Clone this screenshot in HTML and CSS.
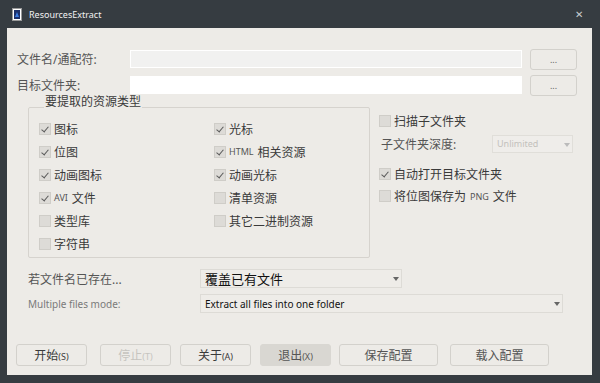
FILE: index.html
```html
<!DOCTYPE html>
<html lang="zh-CN">
<head>
    <meta charset="UTF-8">
    <title>ResourcesExtract</title>
    <link rel="stylesheet" href="styles.css">
</head>
<body>
    <div class="window">
        <!-- Title bar -->
        <div class="titlebar">
            <svg class="app-icon" width="10" height="13" viewBox="0 0 10 13">
                <rect x="0.5" y="0.5" width="9" height="12" fill="#fff" stroke="#999"/>
                <rect x="2" y="2" width="6" height="9" fill="#1b2f6b"/>
                <path d="M3 9 L5 4 L7 9 Z" fill="#3a7be0"/>
            </svg>
            <span class="title">ResourcesExtract</span>
            <span class="close">&#x2715;</span>
        </div>

        <div class="client">
            <!-- Paths -->
            <div class="path-row">
                <span class="label">文件名/通配符:</span>
                <div class="input input-dim"></div>
                <button class="btn btn-browse">...</button>
            </div>
            <div class="path-row">
                <span class="label">目标文件夹:</span>
                <div class="input"></div>
                <button class="btn btn-browse">...</button>
            </div>

            <div class="middle">
                <!-- Resource types -->
                <fieldset class="group">
                    <legend>要提取的资源类型</legend>
                    <div class="types">
                        <label class="check on"><span class="box"></span>图标</label>
                        <label class="check on"><span class="box"></span>光标</label>
                        <label class="check on"><span class="box"></span>位图</label>
                        <label class="check on"><span class="box"></span><small>HTML</small>相关资源</label>
                        <label class="check on"><span class="box"></span>动画图标</label>
                        <label class="check on"><span class="box"></span>动画光标</label>
                        <label class="check on"><span class="box"></span><small>AVI</small>文件</label>
                        <label class="check"><span class="box"></span>清单资源</label>
                        <label class="check"><span class="box"></span>类型库</label>
                        <label class="check"><span class="box"></span>其它二进制资源</label>
                        <label class="check"><span class="box"></span>字符串</label>
                    </div>
                </fieldset>

                <!-- Options -->
                <div class="options">
                    <label class="check"><span class="box"></span>扫描子文件夹</label>
                    <div class="depth-row">
                        <span class="label">子文件夹深度:</span>
                        <div class="combo combo-off">Unlimited<span class="arrow"></span></div>
                    </div>
                    <label class="check on"><span class="box"></span>自动打开目标文件夹</label>
                    <label class="check"><span class="box"></span>将位图保存为<small class="mid">PNG</small>文件</label>
                </div>
            </div>

            <!-- Modes -->
            <div class="mode-row mode-first">
                <span class="label">若文件名已存在...</span>
                <div class="combo combo-short">覆盖已有文件<span class="arrow"></span></div>
            </div>
            <div class="mode-row">
                <span class="label label-en">Multiple files mode:</span>
                <div class="combo combo-long">Extract all files into one folder<span class="arrow"></span></div>
            </div>

            <!-- Actions -->
            <div class="actions">
                <button class="btn btn-act">开始<small>(S)</small></button>
                <button class="btn btn-act btn-off">停止<small>(T)</small></button>
                <button class="btn btn-act">关于<small>(A)</small></button>
                <button class="btn btn-act btn-pressed">退出<small>(X)</small></button>
                <button class="btn btn-wide">保存配置</button>
                <button class="btn btn-wide">载入配置</button>
            </div>
        </div>
    </div>
</body>
</html>
```

FILE: styles.css
```css
* {
    margin: 0;
    padding: 0;
    box-sizing: border-box;
}

body {
    width: 600px;
    height: 383px;
    overflow: hidden;
    background: #363c41;
    font-family: "Noto Sans", "Noto Sans CJK SC", sans-serif;
    font-size: 12px;
    color: #3a3a3a;
}

.window {
    display: flex;
    flex-direction: column;
    height: 100%;
}

/* Title bar */
.titlebar {
    height: 28px;
    display: flex;
    align-items: center;
    padding-left: 12px;
    color: #f2f2f2;
}

.app-icon {
    margin-right: 7px;
}

.title {
    font-size: 9px;
}

.close {
    margin-left: auto;
    margin-right: 17px;
    font-size: 10px;
    color: #c9cccf;
}

/* Client area */
.client {
    margin: 0 8px 0 7px;
    height: 347px;
    background: #edebe7;
    padding: 21px 15px 0 10px;
}

.label {
    color: #555;
    white-space: nowrap;
}

.path-row {
    display: flex;
    align-items: center;
    height: 20px;
    margin-bottom: 6px;
}

.path-row .label {
    width: 113px;
}

.input {
    width: 392px;
    height: 18px;
    background: #fff;
    border: 1px solid #fff;
    margin-right: 8px;
}

.input-dim {
    background: #f1f1f0;
}

.btn {
    font-family: "Noto Sans", "Noto Sans CJK SC", sans-serif;
    font-size: 12px;
    color: #3a3a3a;
    background: #edebe7;
    border: 1px solid #d3d1cc;
    border-radius: 3px;
    height: 21px;
}

.btn small {
    font-size: 9px;
}

.btn-browse {
    width: 47px;
    font-size: 9px;
    color: #666;
}

/* Middle section */
.middle {
    display: flex;
    margin-left: 11px;
}

.group {
    width: 342px;
    height: 157px;
    border: 1px solid #d6d3ce;
    border-radius: 2px;
    padding: 4px 0 0 10px;
}

.group legend {
    margin-left: 5px;
    padding: 0 1px;
    line-height: 12px;
    color: #3a3a3a;
    transform: translateY(-5px);
}

.types {
    display: grid;
    grid-template-columns: 175px 1fr;
    grid-auto-rows: 23px;
}

.check {
    display: flex;
    align-items: center;
    white-space: nowrap;
}

.check small {
    font-size: 9px;
    color: #555;
    margin-right: 4px;
}

.check small.mid {
    margin-left: 4px;
}

.box {
    width: 12px;
    height: 12px;
    margin-right: 3px;
    background: #dddbd7;
    border: 1px solid #cfcdc8;
    position: relative;
}

.check.on .box::after {
    content: "";
    position: absolute;
    left: 3px;
    top: 1px;
    width: 3px;
    height: 6px;
    border: solid #5a5a5a;
    border-width: 0 1.5px 1.5px 0;
    transform: rotate(40deg);
}

.options {
    display: flex;
    flex-direction: column;
    margin-left: 9px;
    padding-top: 9px;
}

.options .check {
    height: 22px;
}

.depth-row {
    display: flex;
    align-items: center;
    height: 23px;
    margin-bottom: 8px;
    padding-left: 2px;
}

.depth-row .label {
    width: 111px;
}

.combo {
    position: relative;
    display: flex;
    align-items: center;
    height: 19px;
    padding-left: 4px;
    background: #eeece8;
    border: 1px solid #dddbd6;
    color: #111;
}

.combo .arrow {
    position: absolute;
    right: 2px;
    top: 7px;
    border: 3px solid transparent;
    border-top: 4px solid #666;
}

.combo-off {
    width: 81px;
    height: 18px;
    font-size: 9px;
    color: #c3c1bc;
    background: #efedea;
    border-color: #e0ded9;
}

.combo-off .arrow {
    border-top-color: #bbb;
}

.combo-short {
    width: 202px;
    font-size: 13px;
}

.combo-long {
    width: 363px;
    font-size: 10px;
}

/* Mode rows */
.mode-row {
    display: flex;
    align-items: center;
    height: 19px;
    margin-left: 11px;
    margin-bottom: 6px;
}

.mode-first {
    margin-top: 11px;
}

.mode-row .label {
    width: 172px;
}

.label-en {
    font-size: 10px;
    color: #7a7a7a;
}

/* Actions */
.actions {
    display: flex;
    margin-top: 31px;
    margin-left: -1px;
}

.btn-act {
    width: 71px;
    height: 22px;
    margin-right: 9px;
}

.btn-act:first-child {
    margin-right: 13px;
}

.btn-off {
    color: #c6c4bf;
}

.btn-pressed {
    background: #d9d7d2;
    border-color: #d9d7d2;
    color: #555;
    margin-right: 8px;
}

.btn-wide {
    width: 99px;
    height: 22px;
    margin-right: 12px;
    color: #555;
}
```
